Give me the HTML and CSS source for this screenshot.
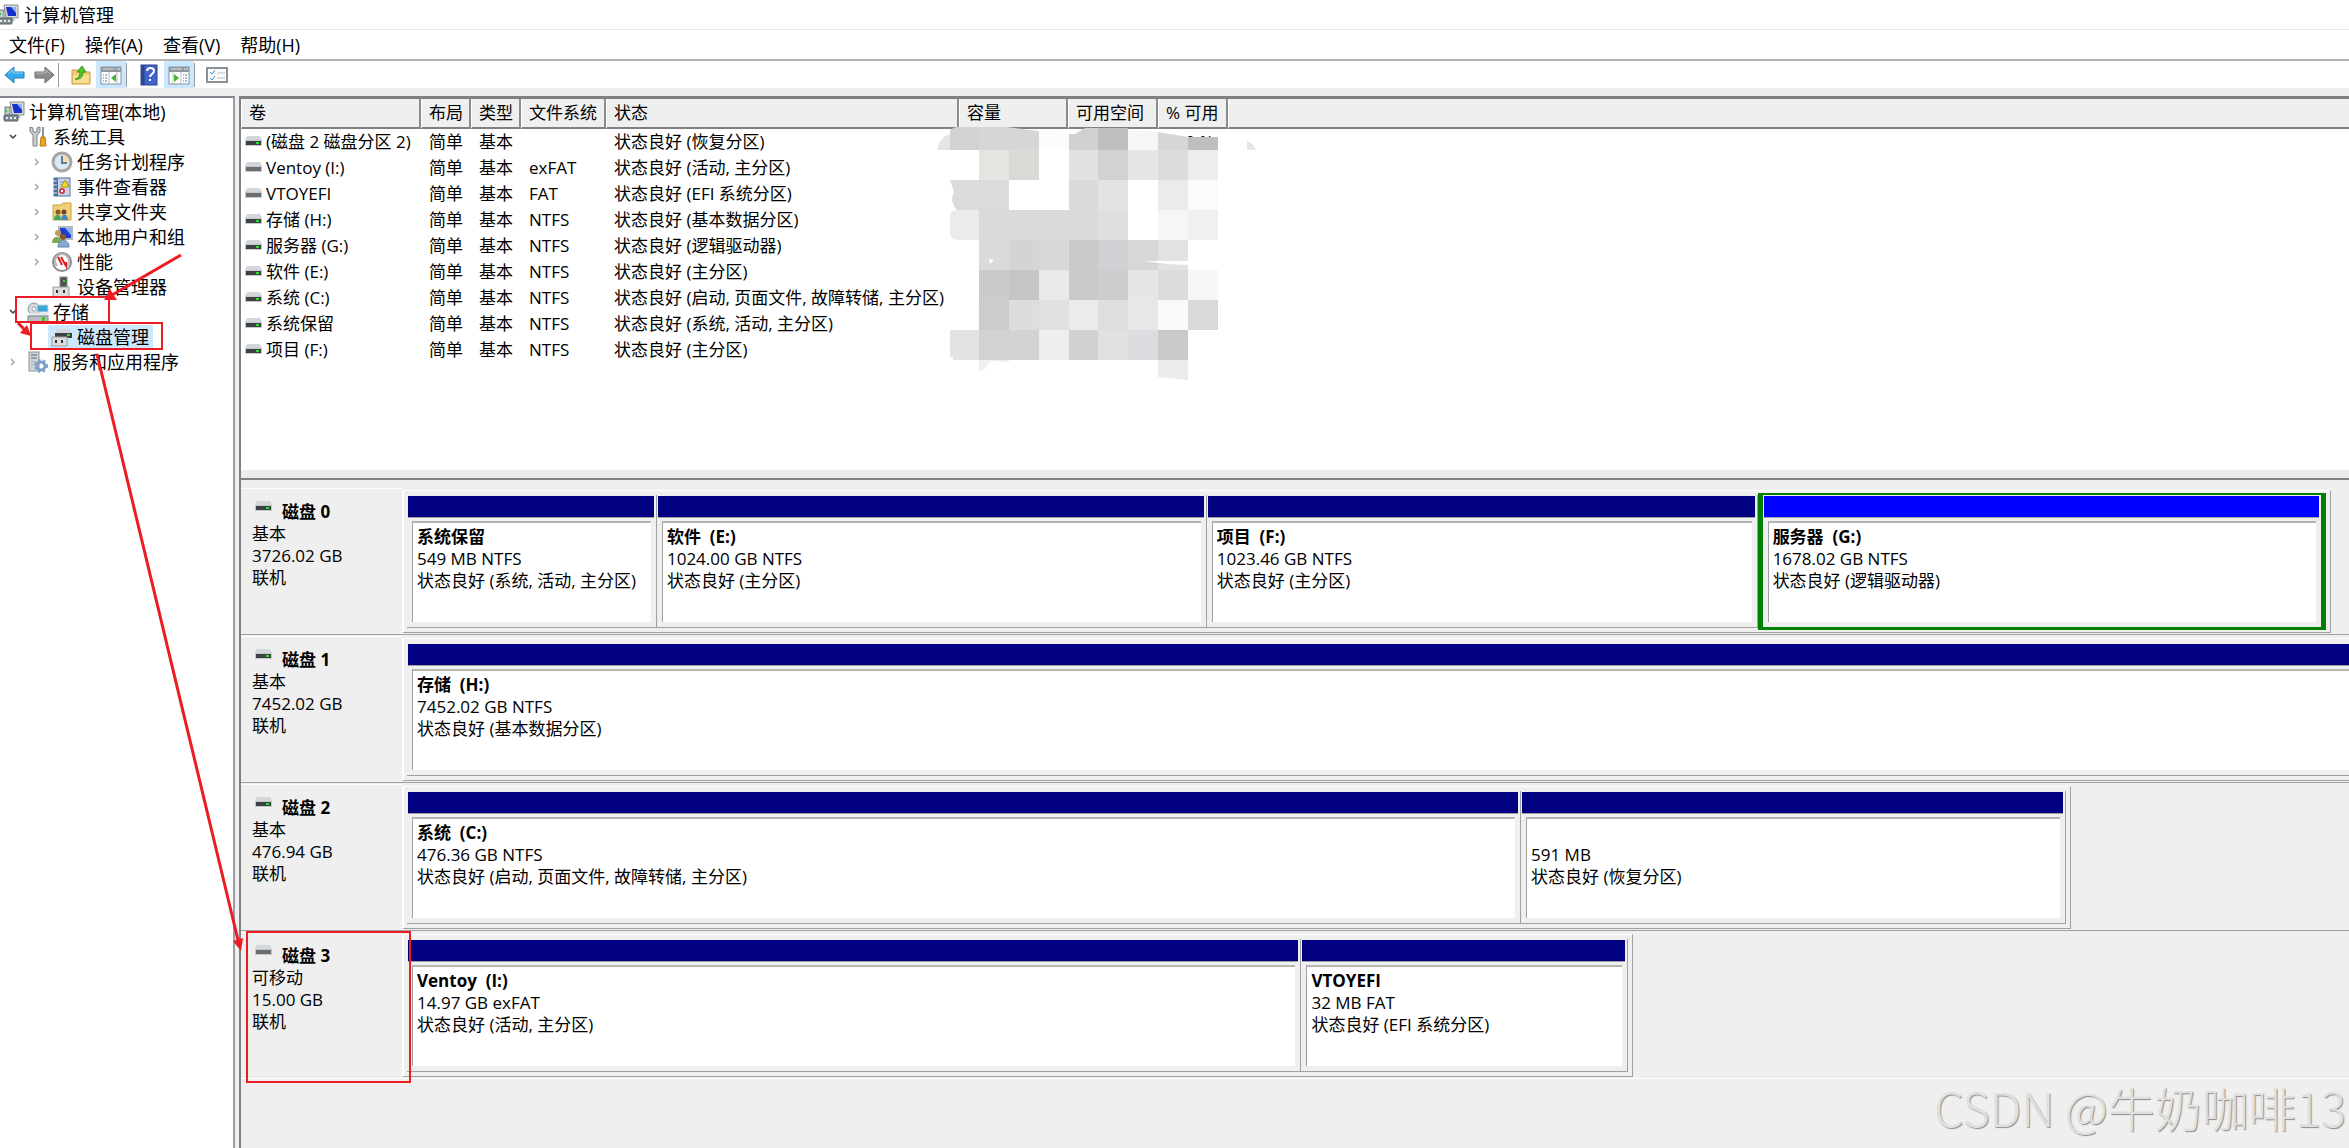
FILE: index.html
```
<!DOCTYPE html>
<html lang="zh-CN">
<head>
  <meta charset="UTF-8">
  <title>计算机管理</title>
  <link rel="stylesheet" href="styles.css">
</head>

<body>
  <!-- Shared icons -->
  <svg class="sprite" width="0" height="0">
    <symbol id="computer" viewBox="0 0 22 22">
      <path d="M7 1h14v13H9z" fill="#d8d8d0" stroke="#8b8f94"/>
      <path d="M9 3h10v9h-8z" fill="#1430d0"/>
      <path d="M14 3h5v6z" fill="#8fb4ff"/>
      <rect x="2" y="6" width="5" height="9" fill="#c3c8cb" stroke="#777d82"/>
      <rect x="2" y="9" width="2" height="2" fill="#37c837"/>
      <path d="M10 14h6l2 3H8z" fill="#b5b9bc"/>
      <rect x="1" y="14" width="14" height="6" rx="1" fill="#7f8a90" stroke="#596268"/>
      <path d="M3 17h2M7 17h2M11 17h2" stroke="#e8eef0" stroke-width="2"/>
    </symbol>
    <symbol id="drive" viewBox="0 0 17 10">
      <path d="M2 0h13l2 4H0z" fill="#d3d6da"/>
      <rect y="4" width="17" height="6" fill="#c4c9cd"/>
      <rect x="1" y="5" width="15" height="4" fill="#3d4143"/>
      <rect x="11" y="6" width="3" height="2" fill="#2fe02f"/>
    </symbol>
    <symbol id="removable" viewBox="0 0 17 10">
      <path d="M2 0h13l2 4H0z" fill="#d3d6da"/>
      <rect y="4" width="17" height="6" fill="#c4c9cd"/>
      <rect x="1" y="5" width="15" height="4" fill="#6b6e70"/>
    </symbol>
    <symbol id="open" viewBox="0 0 16 16"><path d="M5 6l3 3 3-3" fill="none" stroke="#404040" stroke-width="1.5"/></symbol>
    <symbol id="closed" viewBox="0 0 16 16"><path d="M6 5l3 3-3 3" fill="none" stroke="#a6a6a6" stroke-width="1.5"/></symbol>
  </svg>

  <header class="title-bar">
    <svg class="icon"><use href="#computer"/></svg>
    <span>计算机管理</span>
  </header>

  <nav class="menu-bar">
    <button>文件(F)</button>
    <button>操作(A)</button>
    <button>查看(V)</button>
    <button>帮助(H)</button>
  </nav>

  <div class="toolbar">
    <button aria-label="后退">
      <svg class="icon" viewBox="0 0 22 22"><path d="M1 11l9-8v5h10v6H10v5z" fill="#35a9ea" stroke="#2a7fb5"/><path d="M4 10l5-4v3h10" fill="none" stroke="#8fd6fb"/></svg>
    </button>
    <button aria-label="前进">
      <svg class="icon" viewBox="0 0 22 22"><path d="M21 11l-9-8v5H2v6h10v5z" fill="#8c8c8c" stroke="#6c6c6c"/><path d="M3 9h10V6l4 4" fill="none" stroke="#b9b9b9"/></svg>
    </button>
    <span class="divider"></span>
    <button class="wide" aria-label="上一级">
      <svg class="icon" viewBox="0 0 22 22"><path d="M2 6h6l2 2h10v12H2z" fill="#efce72" stroke="#c9a03c"/><path d="M3 11h16v8H3z" fill="#f7de93"/><path d="M5 15c3 0 5-3 5-7H7l5-6 4 6h-3c0 5-3 8-8 7z" fill="#4fc32b" stroke="#3a9a1e"/></svg>
    </button>
    <button class="wide active" aria-label="显示控制台树">
      <svg class="icon" viewBox="0 0 22 22"><rect x="1" y="3" width="20" height="17" fill="#fff" stroke="#8a9096"/><rect x="1" y="3" width="20" height="5" fill="#8f969c"/><path d="M3 5h11" stroke="#dfe3e6"/><path d="M16 5h1M18 5h2" stroke="#fff"/><path d="M3 11h4M3 14h4M3 17h4" stroke="#4c7cb5" stroke-dasharray="1 1 3"/><path d="M9 8v12M17 8v12" stroke="#b9bec2"/><path d="M16 10v8l-5-4z" fill="#42b52c"/></svg>
    </button>
    <span class="divider"></span>
    <button class="wide" aria-label="帮助">
      <svg class="icon" viewBox="0 0 22 22"><rect x="3" y="1" width="16" height="20" fill="#3f63c8" stroke="#2a4390"/><path d="M5 1v20" stroke="#2b448f" stroke-width="3"/><path d="M9 7c0-4 7-4 7 0 0 3-4 3-4 6" fill="none" stroke="#fff" stroke-width="2"/><rect x="11" y="15" width="2" height="2" fill="#fff"/></svg>
    </button>
    <button class="wide active" aria-label="显示操作窗格">
      <svg class="icon" viewBox="0 0 22 22"><rect x="1" y="3" width="20" height="17" fill="#fff" stroke="#8a9096"/><rect x="1" y="3" width="20" height="5" fill="#8f969c"/><path d="M3 5h11" stroke="#dfe3e6"/><path d="M16 5h1M18 5h2" stroke="#fff"/><path d="M15 11h4M15 14h4M15 17h4" stroke="#4c7cb5" stroke-dasharray="1 1 3"/><path d="M5 8v12M13 8v12" stroke="#b9bec2"/><path d="M6 10v8l5-4z" fill="#42b52c"/></svg>
    </button>
    <span class="divider"></span>
    <button class="wide" aria-label="属性">
      <svg class="icon" viewBox="0 0 22 22"><rect x="1" y="4" width="20" height="14" fill="#fbfbfb" stroke="#8a9096" stroke-width="2"/><path d="M4 8l2 2 3-4M4 14l2 2 3-4" fill="none" stroke="#3b8fd6"/><path d="M11 9h8M11 14h8" stroke="#b8bcc0"/></svg>
    </button>
  </div>

  <main class="workspace">
    <!-- Console tree -->
    <nav class="tree">
      <div class="item root">
        <a href="#" class="node"><svg class="icon"><use href="#computer"/></svg>计算机管理(本地)</a>
      </div>
      <div class="item">
        <svg class="chevron"><use href="#open"/></svg>
        <a href="#" class="node"><svg class="icon" viewBox="0 0 22 22"><path d="M3 1v5l3 3v11h4V9l3-3V1l-3 1v4H6V2z" fill="#c9cdd0" stroke="#7d8387"/><path d="M16 1v10" stroke="#8d9499" stroke-width="2"/><path d="M14 11h4l1 9h-6z" fill="#f2a51c" stroke="#b97a10"/></svg>系统工具</a>
      </div>
      <div class="item sub">
        <svg class="chevron"><use href="#closed"/></svg>
        <a href="#" class="node"><svg class="icon" viewBox="0 0 22 22"><circle cx="11" cy="11" r="9" fill="#dde9f2" stroke="#a3a5a6" stroke-width="3"/><path d="M11 11V4a7 7 0 0 1 7 7z" fill="#f3dfae"/><path d="M11 5v7h5" fill="none" stroke="#5f7f9f" stroke-width="2"/></svg>任务计划程序</a>
      </div>
      <div class="item sub">
        <svg class="chevron"><use href="#closed"/></svg>
        <a href="#" class="node"><svg class="icon" viewBox="0 0 22 22"><rect x="3" y="2" width="16" height="18" fill="#c5d5ea" stroke="#55719c"/><rect x="3" y="2" width="4" height="18" fill="#4e6c9c"/><path d="M2 5h4M2 9h4M2 13h4M2 17h4" stroke="#e6e6e6"/><path d="M9 6h9M9 9h9" stroke="#7f98bd"/><path d="M14 4l4 7h-8z" fill="#f8d62f" stroke="#b99a10"/><circle cx="11" cy="15" r="3" fill="#d63a3a"/><path d="M10 14l2 2M12 14l-2 2" stroke="#fff"/></svg>事件查看器</a>
      </div>
      <div class="item sub">
        <svg class="chevron"><use href="#closed"/></svg>
        <a href="#" class="node"><svg class="icon" viewBox="0 0 22 22"><path d="M2 4h8l2-2h8v17H2z" fill="#f1d177" stroke="#c9a03c"/><circle cx="7" cy="11" r="2.5" fill="#8a5a2b"/><circle cx="13" cy="11" r="2.5" fill="#6a4526"/><path d="M3 19c0-7 7-7 7 0z" fill="#3fa564"/><path d="M10 19c0-7 7-7 7 0z" fill="#4a86c4"/></svg>共享文件夹</a>
      </div>
      <div class="item sub">
        <svg class="chevron"><use href="#closed"/></svg>
        <a href="#" class="node"><svg class="icon" viewBox="0 0 22 22"><rect x="8" y="1" width="13" height="12" fill="#1c3fd0" stroke="#b3b8bc" stroke-width="2"/><path d="M14 2h6v7z" fill="#8fb4ff"/><circle cx="7" cy="7" r="3" fill="#c79a52"/><circle cx="12" cy="11" r="3" fill="#8a5a2b"/><path d="M1 17c0-8 9-8 10 0z" fill="#7fa657"/><path d="M7 21c0-9 11-9 11 0z" fill="#86a9cf" stroke="#5f84ab"/></svg>本地用户和组</a>
      </div>
      <div class="item sub">
        <svg class="chevron"><use href="#closed"/></svg>
        <a href="#" class="node"><svg class="icon" viewBox="0 0 22 22"><circle cx="11" cy="11" r="9" fill="#fff" stroke="#8b8b8b" stroke-width="2"/><path d="M6 15a7 7 0 1 1 10 0" fill="none" stroke="#b8b8b8" stroke-width="2"/><path d="M7 6l4 8M10 6l5 9v-4" fill="none" stroke="#d81e1e" stroke-width="2"/></svg>性能</a>
      </div>
      <div class="item sub">
        <svg class="chevron"></svg>
        <a href="#" class="node"><svg class="icon" viewBox="0 0 22 22"><rect x="9" y="1" width="7" height="11" fill="#4c5256" stroke="#84898c"/><rect x="12" y="4" width="2" height="2" fill="#2fe02f"/><rect x="2" y="11" width="16" height="10" fill="#dcdedf" stroke="#9a9ea1"/><rect x="5" y="14" width="2" height="3" fill="#333"/><rect x="12" y="14" width="2" height="3" fill="#333"/></svg>设备管理器</a>
      </div>
      <div class="item">
        <svg class="chevron"><use href="#open"/></svg>
        <a href="#" class="node"><svg class="icon" viewBox="0 0 22 22"><circle cx="7" cy="8" r="6" fill="#d5dadd" stroke="#8d9398"/><circle cx="7" cy="8" r="2" fill="#fff" stroke="#9aa"/><rect x="10" y="4" width="11" height="7" fill="#3aa7d8" stroke="#d2d6d8"/><path d="M3 12h17l2 3H1z" fill="#e4e6e8"/><rect x="1" y="15" width="20" height="6" fill="#b9bec2" stroke="#7f8589"/><rect x="15" y="16" width="3" height="4" fill="#41c02d"/></svg>存储</a>
      </div>
      <div class="item sub">
        <svg class="chevron"></svg>
        <a href="#" class="node selected"><svg class="icon" viewBox="0 0 22 22"><path d="M6 3h12l3 4H4z" fill="#d3d6da"/><rect x="4" y="7" width="17" height="5" fill="#3d4143"/><rect x="16" y="8" width="3" height="2" fill="#2fe02f"/><rect x="1" y="11" width="15" height="9" fill="#dcdedf" stroke="#9a9ea1"/><rect x="4" y="14" width="2" height="3" fill="#333"/><rect x="10" y="14" width="2" height="3" fill="#333"/></svg>磁盘管理</a>
      </div>
      <div class="item">
        <svg class="chevron"><use href="#closed"/></svg>
        <a href="#" class="node"><svg class="icon" viewBox="0 0 22 22"><rect x="2" y="1" width="10" height="19" fill="#cdd5db" stroke="#8b949a"/><path d="M4 4h6M4 7h6" stroke="#5a6a75"/><path d="M4 11h6M4 14h6" stroke="#9dabb5"/><circle cx="14" cy="15" r="4" fill="none" stroke="#7ba0c4" stroke-width="3"/><circle cx="14" cy="15" r="6" fill="none" stroke="#7ba0c4" stroke-width="2" stroke-dasharray="2 3"/></svg>服务和应用程序</a>
      </div>
    </nav>

    <div class="content">
      <!-- Volume list -->
      <section class="volumes">
        <table>
          <colgroup>
            <col class="c-name"><col class="c-kind"><col class="c-kind"><col class="c-fs"><col class="c-status"><col class="c-size"><col class="c-free"><col class="c-pct"><col>
          </colgroup>
          <thead>
            <tr><th>卷</th><th>布局</th><th>类型</th><th>文件系统</th><th>状态</th><th>容量</th><th>可用空间</th><th>% 可用</th><th></th></tr>
          </thead>
          <tbody>
            <tr><td><svg class="disk-icon"><use href="#drive"/></svg>(磁盘 2 磁盘分区 2)</td><td>简单</td><td>基本</td><td></td><td>状态良好 (恢复分区)</td><td></td><td></td><td>100 %</td><td></td></tr>
            <tr><td><svg class="disk-icon"><use href="#removable"/></svg>Ventoy (I:)</td><td>简单</td><td>基本</td><td>exFAT</td><td>状态良好 (活动, 主分区)</td><td></td><td></td><td></td><td></td></tr>
            <tr><td><svg class="disk-icon"><use href="#removable"/></svg>VTOYEFI</td><td>简单</td><td>基本</td><td>FAT</td><td>状态良好 (EFI 系统分区)</td><td></td><td></td><td></td><td></td></tr>
            <tr><td><svg class="disk-icon"><use href="#drive"/></svg>存储 (H:)</td><td>简单</td><td>基本</td><td>NTFS</td><td>状态良好 (基本数据分区)</td><td></td><td></td><td></td><td></td></tr>
            <tr><td><svg class="disk-icon"><use href="#drive"/></svg>服务器 (G:)</td><td>简单</td><td>基本</td><td>NTFS</td><td>状态良好 (逻辑驱动器)</td><td></td><td></td><td></td><td></td></tr>
            <tr><td><svg class="disk-icon"><use href="#drive"/></svg>软件 (E:)</td><td>简单</td><td>基本</td><td>NTFS</td><td>状态良好 (主分区)</td><td></td><td></td><td></td><td></td></tr>
            <tr><td><svg class="disk-icon"><use href="#drive"/></svg>系统 (C:)</td><td>简单</td><td>基本</td><td>NTFS</td><td>状态良好 (启动, 页面文件, 故障转储, 主分区)</td><td></td><td></td><td></td><td></td></tr>
            <tr><td><svg class="disk-icon"><use href="#drive"/></svg>系统保留</td><td>简单</td><td>基本</td><td>NTFS</td><td>状态良好 (系统, 活动, 主分区)</td><td></td><td></td><td></td><td></td></tr>
            <tr><td><svg class="disk-icon"><use href="#drive"/></svg>项目 (F:)</td><td>简单</td><td>基本</td><td>NTFS</td><td>状态良好 (主分区)</td><td></td><td></td><td></td><td></td></tr>
          </tbody>
        </table>

        <!-- Mosaic over the size columns -->
        <svg class="mosaic" viewBox="937 127 320 254">
          <path d="M937 150q2-13 13-16v16z" fill="#e5e5e5"/>
          <path d="M950 150v-20q4-3 8-3h21v23z" fill="#d2d2d2"/>
          <path d="M979 127h28l32 4v19h-60z" fill="#d5d6d5"/>
          <path d="M1039 131l30 3v16h-30z" fill="#fbfdfc"/>
          <path d="M1069 134h6l10-6h13v22h-29z" fill="#cfd0d0"/>
          <path d="M1098 128h30v22h-30z" fill="#bfbfbf"/>
          <path d="M1128 130l30 2v18h-30z" fill="#f6f6f6"/>
          <path d="M1158 132l30 5v13h-30z" fill="#d6d6d4"/>
          <path d="M1188 137h30v13h-30z" fill="#bfbfbf"/>
          <path d="M1247 141q7 3 9 9h-9z" fill="#e5e5e5"/>

          <path d="M979 150h30v30h-30z" fill="#e4e4e1"/><path d="M1009 150h30v30h-30z" fill="#d9d9d6"/><path d="M1039 150h30v30h-30z" fill="#fff"/><path d="M1069 150h29v30h-29z" fill="#e1e1e1"/><path d="M1098 150h30v30h-30z" fill="#d2d2d2"/><path d="M1128 150h30v30h-30z" fill="#e6e6e6"/><path d="M1158 150h30v30h-30z" fill="#dcdcdc"/><path d="M1188 150h30v30h-30z" fill="#ededed"/>

          <path d="M950 180h59v30h-52q-8-9-3-18z" fill="#dbdbdb"/><path d="M1069 180h29v30h-29z" fill="#dbdad8"/><path d="M1098 180h30v30h-30z" fill="#e3e3e3"/><path d="M1158 180h30v30h-30z" fill="#ebebea"/><path d="M1188 180h30v30h-30z" fill="#fbfdfc"/>

          <path d="M979 210v30h-20q-9-1-9-6v-18q0-5 7-6z" fill="#ebebeb"/><path d="M979 210h90v30h-90z" fill="#dadada"/><path d="M1069 210h29v30h-29z" fill="#dadad8"/><path d="M1098 210h30v30h-30z" fill="#dfdfdf"/><path d="M1158 210h30v30h-30z" fill="#f6f6f4"/><path d="M1188 210h30v30h-30z" fill="#f0f0f0"/>

          <path d="M979 240h30v30h-30z" fill="#dadada"/><path d="M1009 240h30v30h-30z" fill="#d4d4d5"/><path d="M1039 240h30v30h-30z" fill="#d8d8d9"/><path d="M1069 240h29v30h-29z" fill="#cacacb"/><path d="M1098 240h30v30h-30z" fill="#d0d1d4"/><path d="M1128 240h30v30h-30z" fill="#d5d8d6"/><path d="M1158 240h30v30h-30z" fill="#e2e2e2"/>
          <path d="M1144 261h44v4l-20-1zM989 259l5 1-4 4z" fill="#fff"/>

          <path d="M979 270h30v30h-30z" fill="#cbcbcb"/><path d="M1009 270h30v30h-30z" fill="#c6c6c6"/><path d="M1039 270h30v30h-30z" fill="#e7e9eb"/><path d="M1069 270h29v30h-29z" fill="#cacaca"/><path d="M1098 270h30v30h-30z" fill="#cdcdcd"/><path d="M1128 270h30v30h-30z" fill="#e4e7e5"/><path d="M1158 270h30v30h-30z" fill="#dcdcdd"/><path d="M1188 270h30v30h-30z" fill="#f7f7f7"/>

          <path d="M979 300h30v30h-30z" fill="#cbcccb"/><path d="M1009 300h30v30h-30z" fill="#ddd"/><path d="M1039 300h30v30h-30z" fill="#e1e1e2"/><path d="M1069 300h29v30h-29z" fill="#ebece9"/><path d="M1098 300h30v30h-30z" fill="#dededc"/><path d="M1128 300h30v30h-30z" fill="#e6e8e7"/><path d="M1158 300h30v30h-30z" fill="#f9f9f9"/><path d="M1188 300h30v30h-30z" fill="#d9d9d9"/>

          <path d="M950 330h29v30h-26v-3h-3z" fill="#e3e3e1"/><path d="M979 330h30v30h-30z" fill="#d2d2d2"/><path d="M1009 330h30v30h-30z" fill="#d2d4d3"/><path d="M1039 330h30v30h-30z" fill="#eee"/><path d="M1069 330h29v30h-29z" fill="#d1d1d1"/><path d="M1098 330h30v30h-30z" fill="#dfe2e0"/><path d="M1128 330h30v30h-30z" fill="#dcdde1"/><path d="M1158 330h30v30h-30z" fill="#c9c9c9"/>

          <path d="M979 360h30v2l-19-1q-3 8-11 11z" fill="#f0f0f0"/><path d="M1158 360h30v20l-30-3z" fill="#ebebeb"/>
        </svg>
      </section>

      <!-- Graphical view, one row per disk -->
      <section class="disks">
        <div class="disk">
          <div class="disk-label">
            <div class="disk-name"><svg class="disk-icon"><use href="#drive"/></svg><b>磁盘 0</b></div>
            <p>基本</p>
            <p>3726.02 GB</p>
            <p>联机</p>
          </div>
          <div class="disk-area">
            <div class="track" style="width: 99.1%">
              <div class="part" style="flex-grow: 249"><div class="bar"></div><div class="info"><b>系统保留</b><p>549 MB NTFS</p><p>状态良好 (系统, 活动, 主分区)</p></div></div>
              <div class="part" style="flex-grow: 549"><div class="bar"></div><div class="info"><b>软件  (E:)</b><p>1024.00 GB NTFS</p><p>状态良好 (主分区)</p></div></div>
              <div class="part" style="flex-grow: 550"><div class="bar"></div><div class="info"><b>项目  (F:)</b><p>1023.46 GB NTFS</p><p>状态良好 (主分区)</p></div></div>
              <div class="part logical" style="flex-grow: 559"><div class="bar"></div><div class="info"><b>服务器  (G:)</b><p>1678.02 GB NTFS</p><p>状态良好 (逻辑驱动器)</p></div></div>
            </div>
          </div>
        </div>

        <div class="disk">
          <div class="disk-label">
            <div class="disk-name"><svg class="disk-icon"><use href="#drive"/></svg><b>磁盘 1</b></div>
            <p>基本</p>
            <p>7452.02 GB</p>
            <p>联机</p>
          </div>
          <div class="disk-area">
            <div class="track" style="width: 102%">
              <div class="part" style="flex-grow: 1"><div class="bar"></div><div class="info"><b>存储  (H:)</b><p>7452.02 GB NTFS</p><p>状态良好 (基本数据分区)</p></div></div>
            </div>
          </div>
        </div>

        <div class="disk">
          <div class="disk-label">
            <div class="disk-name"><svg class="disk-icon"><use href="#drive"/></svg><b>磁盘 2</b></div>
            <p>基本</p>
            <p>476.94 GB</p>
            <p>联机</p>
          </div>
          <div class="disk-area">
            <div class="track" style="width: 85.7%">
              <div class="part" style="flex-grow: 1116"><div class="bar"></div><div class="info"><b>系统  (C:)</b><p>476.36 GB NTFS</p><p>状态良好 (启动, 页面文件, 故障转储, 主分区)</p></div></div>
              <div class="part" style="flex-grow: 545"><div class="bar"></div><div class="info"><b></b><p>591 MB</p><p>状态良好 (恢复分区)</p></div></div>
            </div>
          </div>
        </div>

        <div class="disk last">
          <div class="disk-label">
            <div class="disk-name"><svg class="disk-icon"><use href="#removable"/></svg><b>磁盘 3</b></div>
            <p>可移动</p>
            <p>15.00 GB</p>
            <p>联机</p>
          </div>
          <div class="disk-area">
            <div class="track" style="width: 63.2%">
              <div class="part" style="flex-grow: 896"><div class="bar"></div><div class="info"><b>Ventoy  (I:)</b><p>14.97 GB exFAT</p><p>状态良好 (活动, 主分区)</p></div></div>
              <div class="part" style="flex-grow: 326"><div class="bar"></div><div class="info"><b>VTOYEFI</b><p>32 MB FAT</p><p>状态良好 (EFI 系统分区)</p></div></div>
            </div>
          </div>
        </div>
      </section>
    </div>
  </main>

  <!-- Red marks -->
  <svg class="marks" width="420" height="1100">
    <g fill="none" stroke="#ed1c24" stroke-width="2">
      <rect x="16" y="297" width="93" height="25"/>
      <rect x="31" y="323" width="131" height="26"/>
      <rect x="247" y="932" width="163" height="150"/>
      <path d="M181 255L112 295M18 323l8 8M97 354l141 586" stroke-width="3"/>
    </g>
    <path d="M104 300l6-11 7 11zM31 336l-11-3 7-8zM241 951l-8-10 10-3z" fill="#ed1c24"/>
  </svg>

  <div class="watermark">CSDN @牛奶咖啡13</div>
</body>
</html>
```
FILE: styles.css
```
* {
  box-sizing: border-box;
}

body {
  margin: 0;
  height: 100vh;
  display: flex;
  flex-direction: column;
  overflow: hidden;
  position: relative;
  background-color: #efefef;
  color: #000;
  font-family: "Open Sans", "Noto Sans CJK SC", sans-serif;
  font-size: 17px;
  line-height: 22px;
}

p {
  margin: 0;
}

button {
  border: none;
  padding: 0;
  background: transparent;
  font: inherit;
  color: inherit;
}

.sprite {
  position: absolute;
}

.icon {
  width: 22px;
  height: 22px;
  flex: none;
}

.disk-icon {
  width: 17px;
  height: 10px;
  flex: none;
}

/* Top bars */
.title-bar {
  display: flex;
  align-items: center;
  gap: 5px;
  height: 30px;
  background-color: #fff;
  border-bottom: 1px solid #e8e8e8;
  font-size: 18px;
}

.title-bar .icon {
  margin-left: -3px;
}

.menu-bar {
  display: flex;
  gap: 20px;
  height: 31px;
  padding-left: 9px;
  background-color: #fff;
  border-bottom: 2px solid #b4b4b4;
  font-size: 18px;
}

.toolbar {
  display: flex;
  align-items: center;
  height: 27px;
  background-color: #fff;
}

.toolbar button {
  display: flex;
  align-items: center;
  justify-content: center;
  width: 29px;
  height: 27px;
}

.toolbar .wide {
  width: 30px;
}

.toolbar .active {
  background-color: #cce8ff;
}

.divider {
  width: 1px;
  height: 24px;
  background-color: #9a9a9a;
}

.divider + .wide {
  margin-left: 7px;
}

/* Tree */
.workspace {
  flex: 1;
  min-height: 0;
  display: flex;
  gap: 4px;
  margin-top: 8px;
}

.tree {
  width: 235px;
  flex: none;
  padding-top: 1px;
  background-color: #fff;
  border-top: 2px solid #828790;
  border-right: 2px solid #9a9ea5;
  font-size: 18px;
}

.item {
  display: flex;
  align-items: center;
  gap: 3px;
  height: 25px;
  padding-left: 5px;
}

.item.root {
  padding-left: 0;
}

.item.sub {
  padding-left: 29px;
}

.chevron {
  width: 16px;
  height: 16px;
  flex: none;
}

.node {
  display: flex;
  align-items: center;
  gap: 4px;
  height: 24px;
  padding: 0 4px 0 3px;
  color: #000;
  text-decoration: none;
  white-space: nowrap;
}

.node.selected {
  background-color: #cce8ff;
}

/* Volume list */
.content {
  flex: 1;
  min-width: 0;
  display: flex;
  flex-direction: column;
  border-left: 2px solid #808080;
  border-top: 3px solid #808080;
}

.volumes {
  flex: 0 0 36.15%;
  position: relative;
  background-color: #fff;
  border-bottom: 8px solid #ececec;
}

table {
  width: 100%;
  table-layout: fixed;
  border-collapse: separate;
  border-spacing: 0;
}

.c-name { width: 180px; }
.c-kind { width: 50px; }
.c-fs { width: 85px; }
.c-status { width: 353px; }
.c-size { width: 109px; }
.c-free { width: 90px; }
.c-pct { width: 70px; }

th {
  height: 30px;
  padding: 0 0 0 7px;
  background-color: #efefef;
  border-left: 1px solid #fff;
  border-right: 2px solid #8c8c8c;
  border-bottom: 2px solid #808080;
  font-weight: normal;
  text-align: left;
  white-space: nowrap;
}

th:last-child {
  border-right: none;
}

td {
  height: 26px;
  padding: 0 0 0 8px;
  white-space: nowrap;
}

td:first-child {
  padding-left: 4px;
}

td .disk-icon {
  margin-right: 4px;
  vertical-align: 2px;
}

.mosaic {
  position: absolute;
  left: 696px;
  top: 28px;
  width: 320px;
  height: 254px;
}

/* Graphical view */
.disks {
  flex: 1;
  min-height: 0;
  padding-top: 8px;
  overflow: hidden;
  border-top: 2px solid #808080;
}

.disk {
  display: flex;
  margin-bottom: 1px;
  border-bottom: 1px solid #a0a0a0;
}

.disk.last {
  border-bottom-color: #fff;
}

.disk-label {
  width: 161px;
  flex: none;
  padding: 12px 0 0 11px;
  border-top: 1px solid #fff;
}

.disk-name {
  display: flex;
  gap: 10px;
  padding-left: 3px;
}

.disk-area {
  flex: 1;
  min-width: 0;
  overflow: hidden;
}

.track {
  display: flex;
  margin: 2px 0 1px;
  padding: 4px 4px 4px 3px;
  border: 1px solid #a0a0a0;
  border-top-color: #fff;
  border-left: 2px solid #fff;
}

.part {
  flex: 1 1 0;
  min-width: 0;
  padding-top: 1px;
  border-right: 1px solid #a0a0a0;
  border-bottom: 1px solid #a0a0a0;
}

.bar {
  height: 22px;
  margin: 0 2px 3px 1px;
  background-color: #000080;
  border-bottom: 1px solid #a0a0a0;
}

.info {
  margin: 0 5px 5px;
  padding: 3px 0 30px 4px;
  background-color: #fff;
  border-top: 2px solid #b4b4b4;
  border-left: 1px solid #a0a0a0;
  white-space: pre;
}

.info b {
  display: block;
  height: 22px;
}

/* Selected logical drive inside the extended partition */
.part.logical {
  border-left: 5px solid #008000;
  border-right: 5px solid #008000;
  border-bottom-color: #008000;
  box-shadow: 0 -2px #008000, 0 2px #008000;
}

.logical .bar {
  background-color: #0000ff;
}

/* Overlays */
.marks {
  position: absolute;
  left: 0;
  top: 0;
  pointer-events: none;
}

.watermark {
  position: absolute;
  right: 3px;
  bottom: 9px;
  font-family: "Noto Sans CJK SC", sans-serif;
  font-size: 47px;
  font-weight: 300;
  line-height: 64px;
  color: #e0e0e0;
  text-shadow: 1px 1px 1px #8c8c8c;
}
```
